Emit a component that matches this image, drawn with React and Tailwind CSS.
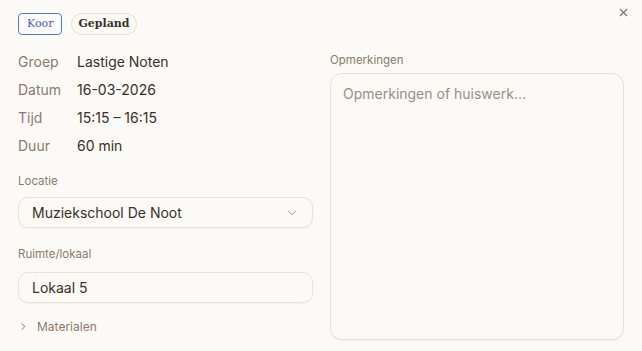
import { ChevronDown, ChevronRight, X } from 'lucide-react';

const details = [
  ['Groep', 'Lastige Noten'],
  ['Datum', '16-03-2026'],
  ['Tijd', '15:15 – 16:15'],
  ['Duur', '60 min'],
];

const App = () => {
  return (
    <div
      className="relative h-[351px] w-[642px] overflow-hidden bg-[#fcfaf6] text-[#3a2f27]"
      style={{ fontFamily: 'Inter, "Noto Sans", sans-serif' }}
    >
      {/* Close */}
      <button className="absolute right-[12px] top-[6px] text-[#7a6e66]">
        <X className="h-[13px] w-[13px]" strokeWidth={2} />
      </button>

      {/* Badges */}
      <div className="flex gap-[9px] px-[18px] pt-[13px]" style={{ fontFamily: '"DejaVu Serif", serif' }}>
        <span className="flex h-[22px] items-center rounded-[4px] border border-[#4a78d6] px-[8px] text-[11px] text-[#4a5fd0]">
          Koor
        </span>
        <span className="flex h-[22px] items-center rounded-full border border-[#eadfcf] px-[6px] text-[11px] font-bold text-[#3a2f27]">
          Gepland
        </span>
      </div>

      <div className="flex gap-[17px] px-[18px] pt-[12px]">
        {/* Left column */}
        <div className="flex w-[295px] flex-col">
          <div className="flex flex-col">
            {details.map(([label, value]) => (
              <div key={label} className="flex h-[28px] items-center text-[14px]">
                <span className="w-[59px] text-[#8a7b6d]">{label}</span>
                <span className="text-[#3a2f27]">{value}</span>
              </div>
            ))}
          </div>

          <div className="mt-[14px] text-[11.5px] text-[#8a7b6d]">Locatie</div>
          <div className="mt-[7px] flex h-[31px] items-center justify-between rounded-[10px] border border-[#ede2d3] bg-[#fcfaf6] pl-[13px] pr-[13px] text-[14px] shadow-[0_1px_1px_rgba(120,90,50,0.06)]">
            <span>Muziekschool De Noot</span>
            <ChevronDown className="h-[14px] w-[14px] text-[#8c8079]" strokeWidth={1.5} />
          </div>

          <div className="mt-[18px] text-[11.5px] text-[#8a7b6d]">Ruimte/lokaal</div>
          <div className="mt-[8px] flex h-[31px] items-center rounded-[10px] border border-[#ede2d3] pl-[13px] text-[14px] shadow-[0_1px_1px_rgba(120,90,50,0.06)]">
            Lokaal 5
          </div>

          <div className="mt-[15px] flex items-center gap-[8px] text-[12px] text-[#8a7b6d]">
            <ChevronRight className="h-[11px] w-[11px] text-[#6e625a]" strokeWidth={2} />
            <span>Materialen</span>
          </div>
        </div>

        {/* Right column */}
        <div className="flex flex-1 flex-col">
          <div className="mt-[5px] text-[11.5px] text-[#8a7b6d]">Opmerkingen</div>
          <div className="mt-[4px] h-[267px] rounded-[12px] border border-[#ecdfcc] bg-[#fcfaf6] px-[12px] pt-[9px] text-[14px] text-[#9a8e83] shadow-[0_1px_1px_rgba(120,90,50,0.06)]">
            Opmerkingen of huiswerk...
          </div>
        </div>
      </div>
    </div>
  );
};

export default App;
